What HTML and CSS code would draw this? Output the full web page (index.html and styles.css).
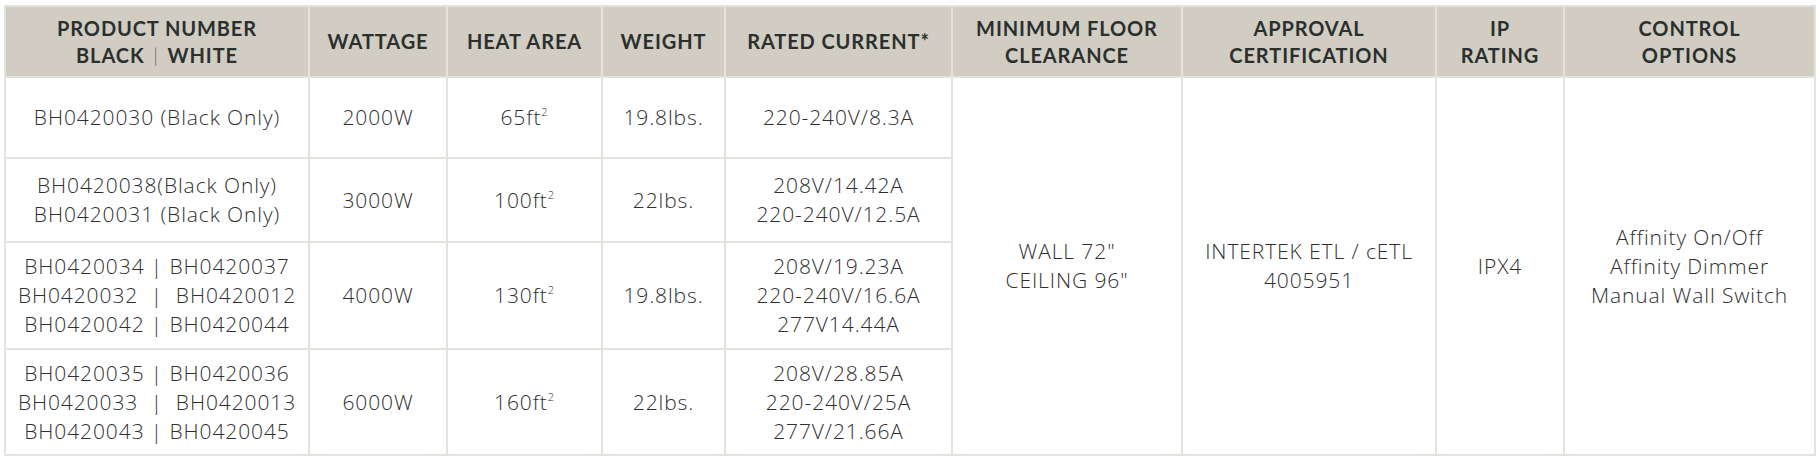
FILE: index.html
```html
<!DOCTYPE html>
<html lang="en">
<head>
<meta charset="utf-8">
<title>Specifications</title>
<link rel="stylesheet" href="styles.css">
</head>
<body>
<table class="spec">
  <colgroup>
    <col class="c1"><col class="c2"><col class="c3"><col class="c4"><col class="c5"><col class="c6"><col class="c7"><col class="c8"><col class="c9">
  </colgroup>
  <thead>
    <tr class="head">
      <th>PRODUCT NUMBER<br>BLACK <span class="bar">|</span> WHITE</th>
      <th>WATTAGE</th>
      <th>HEAT AREA</th>
      <th>WEIGHT</th>
      <th>RATED CURRENT*</th>
      <th>MINIMUM FLOOR<br>CLEARANCE</th>
      <th>APPROVAL<br>CERTIFICATION</th>
      <th>IP<br>RATING</th>
      <th>CONTROL<br>OPTIONS</th>
    </tr>
  </thead>
  <tbody>
    <tr class="r1">
      <td>BH0420030 (Black Only)</td>
      <td>2000W</td>
      <td>65ft<sup>2</sup></td>
      <td>19.8lbs.</td>
      <td>220-240V/8.3A</td>
      <td rowspan="4">WALL 72"<br>CEILING 96"</td>
      <td rowspan="4">INTERTEK ETL / cETL<br>4005951</td>
      <td rowspan="4">IPX4</td>
      <td rowspan="4">Affinity On/Off<br>Affinity Dimmer<br>Manual Wall Switch</td>
    </tr>
    <tr class="r2">
      <td>BH0420038(Black Only)<br>BH0420031 (Black Only)</td>
      <td>3000W</td>
      <td>100ft<sup>2</sup></td>
      <td>22lbs.</td>
      <td>208V/14.42A<br>220-240V/12.5A</td>
    </tr>
    <tr class="r3">
      <td>BH0420034 | BH0420037<br>BH0420032 &nbsp;| &nbsp;BH0420012<br>BH0420042 | BH0420044</td>
      <td>4000W</td>
      <td>130ft<sup>2</sup></td>
      <td>19.8lbs.</td>
      <td>208V/19.23A<br>220-240V/16.6A<br>277V14.44A</td>
    </tr>
    <tr class="r4">
      <td>BH0420035 | BH0420036<br>BH0420033 &nbsp;| &nbsp;BH0420013<br>BH0420043 | BH0420045</td>
      <td>6000W</td>
      <td>160ft<sup>2</sup></td>
      <td>22lbs.</td>
      <td>208V/28.85A<br>220-240V/25A<br>277V/21.66A</td>
    </tr>
  </tbody>
</table>
</body>
</html>
```

FILE: styles.css
```css
html, body {
  margin: 0;
  padding: 0;
  background: #ffffff;
}
body {
  padding: 5px 0 0 4px;
}
.spec {
  border-collapse: collapse;
  table-layout: fixed;
  width: 1810px;
  font-family: Lato, "Liberation Sans", sans-serif;
}
.c1 { width: 304px; }
.c2 { width: 138px; }
.c3 { width: 155px; }
.c4 { width: 123px; }
.c5 { width: 227px; }
.c6 { width: 230px; }
.c7 { width: 254px; }
.c8 { width: 128px; }
.c9 { width: 251px; }
.spec th, .spec td {
  border: 2px solid #e4e2dc;
  text-align: center;
  vertical-align: middle;
  padding: 0 2px;
}
.spec th {
  background: #d1cdc3;
  color: #2b302e;
  font-weight: 700;
  font-size: 20px;
  line-height: 27px;
  letter-spacing: 0.9px;
}
.head { height: 71px; }
.bar {
  font-weight: 300;
  color: #666;
  padding: 0 3px;
}
.spec td {
  font-family: "Open Sans", Lato, sans-serif;
  color: #2f2f2f;
  font-weight: 300;
  font-size: 21px;
  line-height: 29px;
  letter-spacing: 0.9px;
}
.spec sup {
  font-size: 11px;
  line-height: 0;
  vertical-align: 9px;
}
.r1 { height: 81px; }
.r2 { height: 84px; }
.r3 { height: 107px; }
.r4 { height: 106px; }
```
